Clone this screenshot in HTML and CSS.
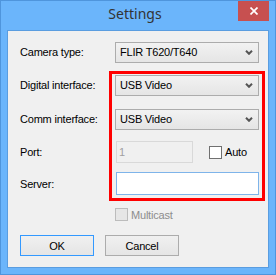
FILE: index.html
```html
<!DOCTYPE html>
<html lang="en">
    <head>
        <meta charset="UTF-8">
        <title>Settings</title>
        <link rel="stylesheet" href="styles.css">
    </head>

    <body>

        <div class="window">

            <!-- title bar -->
            <div class="titlebar">
                <span></span>
                <span class="title">Settings</span>
                <span class="close">
                    <svg width="8" height="8" viewBox="0 0 8 8"><path d="M0.5 0.5L7.5 7.5M7.5 0.5L0.5 7.5" stroke="#fff" stroke-width="1.7"/></svg>
                </span>
            </div>

            <div class="client">

                <!-- camera type -->
                <div class="row row-camera">
                    <label class="label">Camera type:</label>
                    <div class="combo"><span>FLIR T620/T640</span>
                        <svg width="8" height="5" viewBox="0 0 8 5"><path d="M1 0.8L4 3.8L7 0.8" fill="none" stroke="#555" stroke-width="2"/></svg>
                    </div>
                </div>

                <!-- digital interface -->
                <div class="row row-digital">
                    <label class="label">Digital interface:</label>
                    <div class="combo"><span>USB Video</span>
                        <svg width="8" height="5" viewBox="0 0 8 5"><path d="M1 0.8L4 3.8L7 0.8" fill="none" stroke="#555" stroke-width="2"/></svg>
                    </div>
                </div>

                <!-- comm interface -->
                <div class="row row-comm">
                    <label class="label">Comm interface:</label>
                    <div class="combo"><span>USB Video</span>
                        <svg width="8" height="5" viewBox="0 0 8 5"><path d="M1 0.8L4 3.8L7 0.8" fill="none" stroke="#555" stroke-width="2"/></svg>
                    </div>
                </div>

                <!-- port -->
                <div class="row row-port">
                    <label class="label">Port:</label>
                    <div class="field field-port disabled">1</div>
                    <div class="check check-auto">
                        <span class="box"></span>
                        <span>Auto</span>
                    </div>
                </div>

                <!-- server -->
                <div class="row row-server">
                    <label class="label">Server:</label>
                    <div class="field field-server"></div>
                </div>

                <!-- multicast -->
                <div class="row row-multicast">
                    <div class="check disabled">
                        <span class="box"></span>
                        <span>Multicast</span>
                    </div>
                </div>

                <!-- buttons -->
                <div class="row row-buttons">
                    <button class="btn btn-default">OK</button>
                    <button class="btn">Cancel</button>
                </div>

                <div class="highlight"></div>

            </div>

        </div>

    </body>
</html>
```

FILE: styles.css
```css
body {
    margin: 0;
    font-family: "Liberation Sans", Arial, sans-serif;
    font-size: 11px;
    letter-spacing: -0.2px;
    color: #000;
}
.window {
    width: 276px;
    height: 275px;
    box-sizing: border-box;
    border: 1px solid #4f95dc;
    background-color: #6bb5fb;
    display: flex;
    flex-direction: column;
}
.titlebar {
    height: 29px;
    display: grid;
    grid-template-columns: 1fr auto 1fr;
    align-items: start;
    padding-right: 6px;
}
.title {
    font-family: "Noto Sans", sans-serif;
    font-size: 14px;
    letter-spacing: 0;
    color: #333;
    line-height: 26px;
}
.close {
    justify-self: end;
    width: 31px;
    height: 20px;
    background-color: #c75050;
    display: flex;
    align-items: center;
    justify-content: center;
}
.client {
    position: relative;
    flex: 1;
    margin: 0 6px 6px 6px;
    border: 1px solid #5a9de0;
    background-color: #f0f0f0;
    padding: 11px 0 0 12px;
}
.row {
    display: flex;
    align-items: center;
}
.label {
    width: 95px;
    flex: none;
}
.row-camera, .row-digital, .row-comm {
    height: 20px;
}
.row-digital {
    margin-top: 13px;
}
.row-comm {
    margin-top: 14px;
}
.row-port {
    height: 22px;
    margin-top: 12px;
}
.row-server {
    height: 23px;
    margin-top: 9px;
}
.row-multicast {
    height: 13px;
    margin-top: 13px;
    padding-left: 95px;
}
.row-buttons {
    height: 21px;
    margin-top: 14px;
    gap: 11px;
}
.combo {
    width: 144px;
    height: 21px;
    box-sizing: border-box;
    border: 1px solid #acacac;
    background: linear-gradient(#f2f2f2, #e5e5e5);
    display: flex;
    align-items: center;
    justify-content: space-between;
    padding: 0 5px 0 4px;
}
.field {
    height: 100%;
    box-sizing: border-box;
    border: 1px solid #abadb3;
    background-color: #fff;
    margin-left: 1px;
    padding: 0 2px;
    display: flex;
    align-items: center;
}
.field-port {
    width: 77px;
}
.field.disabled {
    border-color: #d9d9d9;
    background-color: #f0f0f0;
    color: #a0a0a0;
}
.field-server {
    width: 143px;
    border-color: #7eb4ea;
}
.check {
    display: flex;
    align-items: center;
    gap: 3px;
}
.check-auto {
    margin-left: 16px;
}
.box {
    width: 13px;
    height: 13px;
    box-sizing: border-box;
    border: 1px solid #707070;
    background-color: #fff;
}
.check.disabled {
    color: #8d8d8d;
}
.check.disabled .box {
    border-color: #bcbcbc;
    background-color: #e6e6e6;
}
.btn {
    width: 74px;
    height: 21px;
    box-sizing: border-box;
    border: 1px solid #acacac;
    background: linear-gradient(#f0f0f0, #e5e5e5);
    font-family: inherit;
    font-size: 11px;
    letter-spacing: inherit;
    color: #000;
    padding: 0;
}
.btn-default {
    border-color: #3399ff;
}
.highlight {
    position: absolute;
    left: 101px;
    top: 40px;
    width: 156px;
    height: 130px;
    box-sizing: border-box;
    border: 3px solid #ff0000;
}
```
